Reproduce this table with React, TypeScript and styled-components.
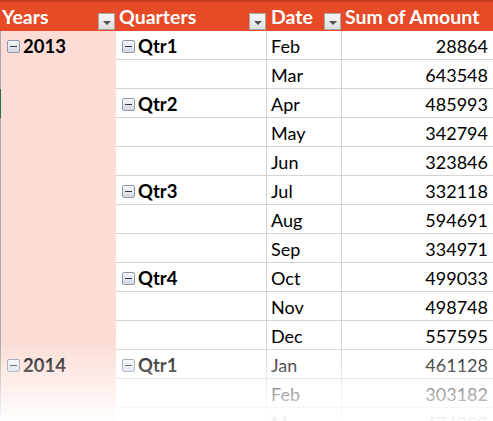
import React from 'react';
import styled, { createGlobalStyle } from 'styled-components';

const Global = createGlobalStyle`
  html, body { margin: 0; padding: 0; background: #fff; }
  body { font-family: Lato, "Open Sans", "Liberation Sans", sans-serif; }
`;

const Sheet = styled.div`
  position: relative;
  width: 493px;
  height: 421px;
  overflow: hidden;
  background: #fff;
`;

const Grid = styled.div`
  display: grid;
  grid-template-columns: 116px 151px 75px 151px;
`;

const HeaderCell = styled.div<{ $pl: number }>`
  box-sizing: border-box;
  height: 31px;
  background: #e64a27;
  border-top: 2px solid #c53d1e;
  color: #fff;
  font-weight: 700;
  font-size: 19.5px;
  padding-left: ${(p) => p.$pl}px;
  display: flex;
  justify-content: space-between;
  white-space: nowrap;
`;

const HeaderTitle = styled.span`
  line-height: 28px;
  padding-top: 0.5px;
`;

const FilterButton = styled.span`
  align-self: flex-end;
  box-sizing: border-box;
  width: 17px;
  height: 17px;
  margin: 0 1px 1px 0;
  border: 1px solid #a6a6a6;
  background: linear-gradient(#f7f7f7, #dedede);
  display: flex;
  align-items: center;
  justify-content: center;
  padding-top: 3px;
  &::after {
    content: '';
    width: 0;
    height: 0;
    border-left: 4px solid transparent;
    border-right: 4px solid transparent;
    border-top: 4px solid #505050;
  }
`;

const YearCell = styled.div<{ $mark?: boolean }>`
  box-sizing: border-box;
  height: 29px;
  background: #fcdcd5;
  border-left: 1px solid ${(p) => (p.$mark ? '#217346' : '#a8a8a8')};
  padding-left: 6px;
  display: flex;
  align-items: flex-start;
  font-weight: 700;
  font-size: 18.5px;
  color: #000;
`;

const QuarterCell = styled.div`
  box-sizing: border-box;
  height: 29px;
  border-right: 1px solid #d4d4d4;
  border-bottom: 1px solid #d4d4d4;
  padding-left: 6px;
  display: flex;
  align-items: flex-start;
  font-weight: 700;
  font-size: 18.5px;
  color: #000;
`;

const DateCell = styled.div`
  box-sizing: border-box;
  height: 29px;
  border-right: 1px solid #d4d4d4;
  border-bottom: 1px solid #d4d4d4;
  padding: 2px 0 0 4px;
  line-height: 26px;
  font-size: 18px;
  color: #000;
`;

const SumCell = styled.div`
  box-sizing: border-box;
  height: 29px;
  border-bottom: 1px solid #d4d4d4;
  padding: 2px 5px 0 0;
  line-height: 26px;
  font-size: 18px;
  text-align: right;
  color: #000;
`;

const Label = styled.span`
  padding-top: 2px;
  line-height: 26px;
`;

const Collapse = styled.span`
  box-sizing: border-box;
  width: 13px;
  height: 13px;
  margin: 9px 3px 0 0;
  border: 1px solid #8c99ad;
  border-radius: 2px;
  background: linear-gradient(#f6f8fa, #d3d9e1);
  display: flex;
  align-items: center;
  justify-content: center;
  flex: none;
  &::after {
    content: '';
    width: 7px;
    height: 1px;
    background: #2f3a4a;
  }
`;

const Fade = styled.div`
  position: absolute;
  left: 0;
  right: 0;
  bottom: 0;
  height: 81px;
  pointer-events: none;
  background: linear-gradient(rgba(255, 255, 255, 0), rgba(255, 255, 255, 0.96));
`;

type Row = { year?: string; quarter?: string; date: string; sum: string; mark?: boolean };

const rows: Row[] = [
  { year: '2013', quarter: 'Qtr1', date: 'Feb', sum: '28864' },
  { date: 'Mar', sum: '643548' },
  { quarter: 'Qtr2', date: 'Apr', sum: '485993', mark: true },
  { date: 'May', sum: '342794' },
  { date: 'Jun', sum: '323846' },
  { quarter: 'Qtr3', date: 'Jul', sum: '332118' },
  { date: 'Aug', sum: '594691' },
  { date: 'Sep', sum: '334971' },
  { quarter: 'Qtr4', date: 'Oct', sum: '499033' },
  { date: 'Nov', sum: '498748' },
  { date: 'Dec', sum: '557595' },
  { year: '2014', quarter: 'Qtr1', date: 'Jan', sum: '461128' },
  { date: 'Feb', sum: '303182' },
  { date: 'Mar', sum: '474932' },
];

export default function App() {
  return (
    <Sheet>
      <Global />
      <Grid>
        <HeaderCell $pl={2}>
          <HeaderTitle>Years</HeaderTitle>
          <FilterButton />
        </HeaderCell>
        <HeaderCell $pl={3}>
          <HeaderTitle>Quarters</HeaderTitle>
          <FilterButton />
        </HeaderCell>
        <HeaderCell $pl={4}>
          <HeaderTitle>Date</HeaderTitle>
          <FilterButton />
        </HeaderCell>
        <HeaderCell $pl={3}>
          <HeaderTitle>Sum of Amount</HeaderTitle>
        </HeaderCell>
        {rows.map((r, i) => (
          <React.Fragment key={i}>
            <YearCell $mark={r.mark}>
              {r.year && (
                <>
                  <Collapse />
                  <Label>{r.year}</Label>
                </>
              )}
            </YearCell>
            <QuarterCell>
              {r.quarter && (
                <>
                  <Collapse />
                  <Label>{r.quarter}</Label>
                </>
              )}
            </QuarterCell>
            <DateCell>{r.date}</DateCell>
            <SumCell>{r.sum}</SumCell>
          </React.Fragment>
        ))}
      </Grid>
      <Fade />
    </Sheet>
  );
}
